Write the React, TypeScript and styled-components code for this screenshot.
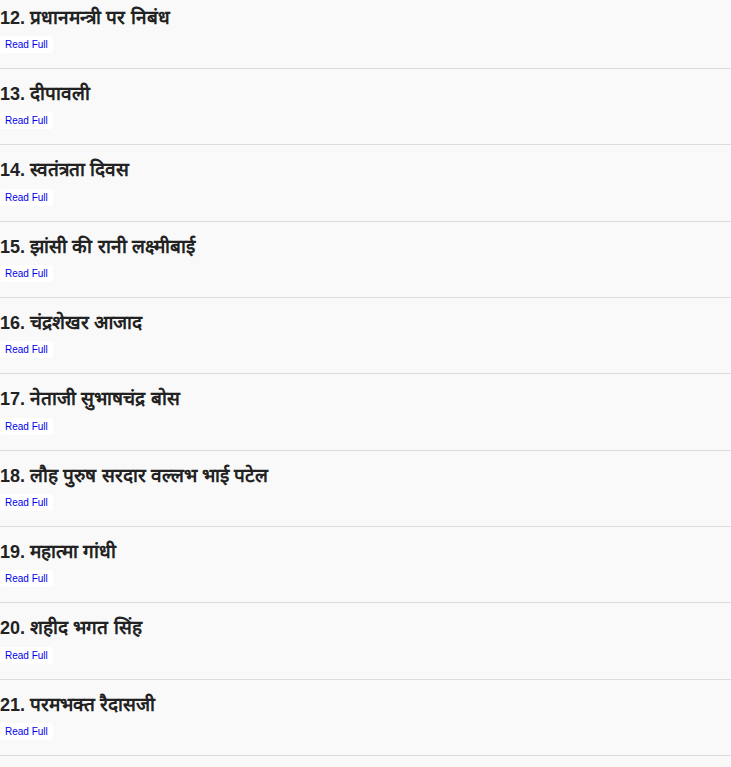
import styled, { createGlobalStyle } from "styled-components";

const GlobalStyle = createGlobalStyle`
  body {
    margin: 0;
    background: #f9f9f9;
    font-family: "Liberation Sans", Arial, sans-serif;
  }
`;

const essays = [
    { num: 12, title: "प्रधानमन्त्री पर निबंध" },
    { num: 13, title: "दीपावली" },
    { num: 14, title: "स्वतंत्रता दिवस" },
    { num: 15, title: "झांसी की रानी लक्ष्मीबाई" },
    { num: 16, title: "चंद्रशेखर आजाद" },
    { num: 17, title: "नेताजी सुभाषचंद्र बोस" },
    { num: 18, title: "लौह पुरुष सरदार वल्लभ भाई पटेल" },
    { num: 19, title: "महात्मा गांधी" },
    { num: 20, title: "शहीद भगत सिंह" },
    { num: 21, title: "परमभक्त रैदासजी" },
];

export default function App() {
    return (<List>
        <GlobalStyle />
        {essays.map((essay) => (
            <Item key={essay.num}>
                <Title>{essay.num}. <HindiText>{essay.title}</HindiText></Title>
                <ReadButton href="#">Read Full</ReadButton>
            </Item>
        ))}
    </List>)
}

const List = styled.div`
  display: flex;
  flex-direction: column;
  margin-top: -7.4px;
`;

const Item = styled.div`
  display: flex;
  flex-direction: column;
  align-items: flex-start;
  gap: 5.33px;
  padding: 12px 0 15px;
  border-bottom: 1px solid #dddddd;
`;

const Title = styled.h3`
  margin: 0;
  font-size: 18px;
  font-weight: bold;
  color: #222222;
  line-height: 26px;
  height: 26px;
`;

const HindiText = styled.span`
  font-size: 19px;
`;

const ReadButton = styled.a`
  display: inline-block;
  background: #ffffff;
  color: #0000ee;
  font-size: 10px;
  line-height: 13px;
  padding: 2px 5px;
  border-radius: 3px;
  text-decoration: none;
`;
